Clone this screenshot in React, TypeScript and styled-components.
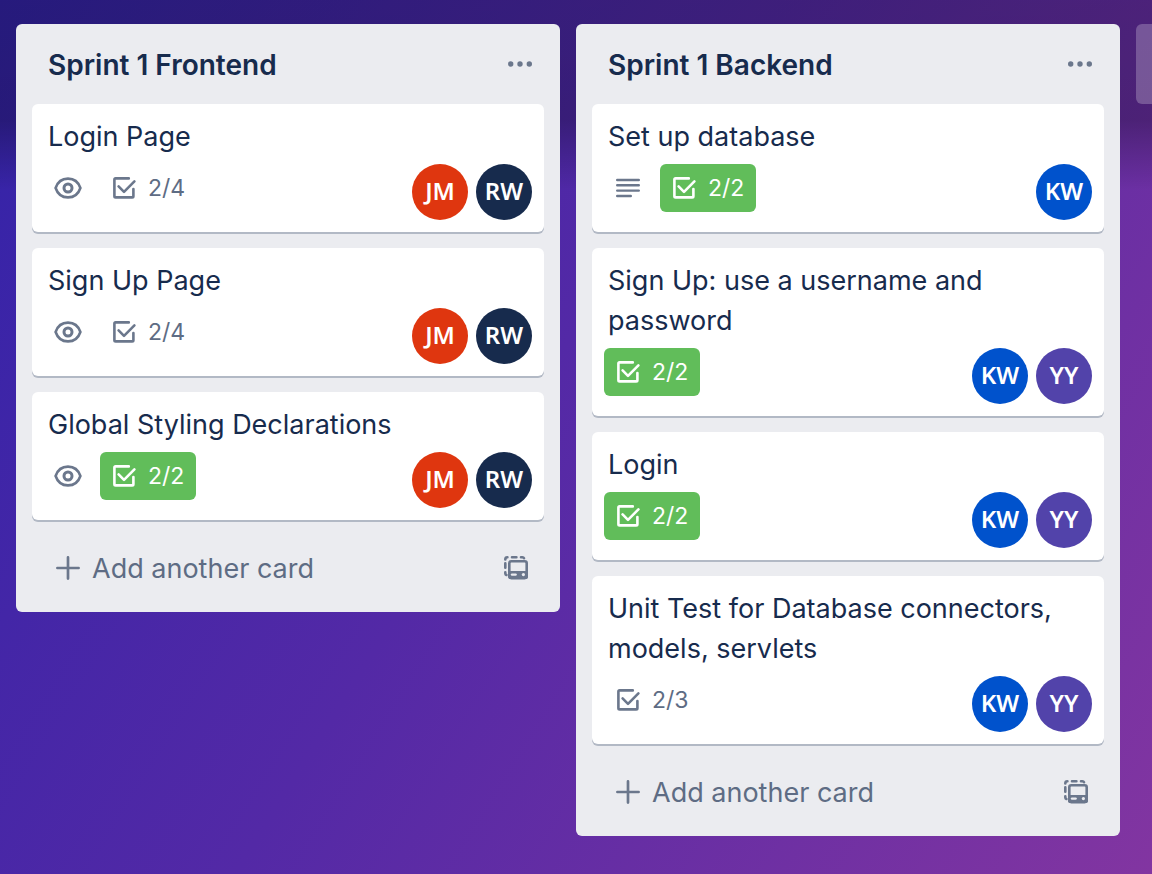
import React from "react";
import styled, { createGlobalStyle } from "styled-components";

const GlobalStyle = createGlobalStyle`
  *, *::before, *::after { box-sizing: border-box; }
  html { height: 100%; }
  body {
    margin: 0;
    height: 100%;
    font-family: Inter, "Liberation Sans", sans-serif;
    color: #172b4d;
  }
  #root { height: 100%; }
`;

const Board = styled.main`
  display: flex;
  align-items: flex-start;
  gap: 16px;
  min-height: 100%;
  padding: 24px 0 24px 16px;
  overflow: hidden;
  background:
    linear-gradient(180deg, rgba(0, 0, 0, 0.26) 0, rgba(0, 0, 0, 0.28) 120px, rgba(0, 0, 0, 0) 190px),
    linear-gradient(122deg, #3323a8 0%, #5329a6 46%, #8235a1 100%);
`;

const List = styled.section`
  flex: 0 0 calc(50% - 24px);
  min-width: 320px;
  padding: 0 16px 12px;
  border-radius: 6px;
  background: #ebecf0;
`;

const ListHeader = styled.header`
  display: flex;
  align-items: center;
  justify-content: space-between;
  height: 80px;
  padding: 0 4px 0 16px;
`;

const ListTitle = styled.h2`
  margin: 0;
  padding-top: 2px;
  font-size: 28px;
  font-weight: 600;
  line-height: 40px;
`;

const IconButton = styled.button`
  display: flex;
  align-items: center;
  justify-content: center;
  width: 40px;
  height: 40px;
  padding: 0;
  border: 0;
  background: none;
  color: #6b778c;
  cursor: pointer;
`;

const Cards = styled.ul`
  display: flex;
  flex-direction: column;
  gap: 16px;
  margin: 0;
  padding: 0;
  list-style: none;
`;

const CardBox = styled.li`
  padding: 13px 12px 12px 16px;
  border-radius: 6px;
  background: #fff;
  box-shadow: 0 2px 0 rgba(9, 30, 66, 0.25);
`;

const CardTitle = styled.h3`
  margin: 0 0 7px;
  font-size: 27px;
  font-weight: 400;
  line-height: 40px;
`;

const CardFooter = styled.div`
  display: flex;
  align-items: flex-start;
  justify-content: space-between;
  margin-left: -4px;
`;

const Group = styled.div`
  display: flex;
  gap: 8px;
`;

const Badge = styled.span<{ $done?: boolean }>`
  display: flex;
  align-items: center;
  height: 48px;
  padding-right: ${(p) => (p.$done ? 12 : 0)}px;
  border-radius: 6px;
  background: ${(p) => (p.$done ? "#61bd5a" : "transparent")};
  color: ${(p) => (p.$done ? "#fff" : "#6b778c")};
  font-size: 23px;
  line-height: 40px;
`;

const BadgeIcon = styled.svg`
  width: 48px;
  height: 48px;
`;

const BadgeText = styled.span<{ $done?: boolean }>`
  color: ${(p) => (p.$done ? "#fff" : "#5e6c84")};
`;

const Avatar = styled.span<{ $color: string }>`
  display: flex;
  align-items: center;
  justify-content: center;
  width: 56px;
  height: 56px;
  padding-bottom: 2px;
  border-radius: 50%;
  background: ${(p) => p.$color};
  color: #fff;
  font-family: "Noto Sans", "Open Sans", sans-serif;
  font-size: 24px;
  font-weight: 600;
  line-height: 32px;
`;

const ListFooter = styled.footer`
  display: flex;
  align-items: center;
  justify-content: space-between;
  height: 64px;
  margin-top: 16px;
  padding: 0 8px 0 16px;
`;

const AddCard = styled.button`
  display: flex;
  align-items: center;
  gap: 4px;
  padding: 0;
  border: 0;
  background: none;
  color: #5e6c84;
  font: inherit;
  font-size: 27px;
  line-height: 40px;
  cursor: pointer;
`;

const AddCardLabel = styled.span`
  padding-top: 2px;
`;

const AddList = styled.button`
  flex: 0 0 calc(50% - 24px);
  height: 80px;
  border: 0;
  border-radius: 6px;
  background: rgba(255, 255, 255, 0.24);
  cursor: pointer;
`;

const EyeIcon = () => (
  <BadgeIcon viewBox="0 0 48 48" fill="none" stroke="currentColor" strokeWidth="2.6" role="img" aria-label="Watching">
    <path d="M11.6 24C13.6 18 18.4 14.6 24 14.6S34.4 18 36.4 24C34.4 30 29.6 33.4 24 33.4S13.6 30 11.6 24Z" />
    <circle cx="24" cy="24" r="4" strokeWidth="3" />
  </BadgeIcon>
);

const CheckIcon = () => (
  <BadgeIcon viewBox="0 0 48 48" fill="none" stroke="currentColor" strokeWidth="2.6" strokeLinecap="round" strokeLinejoin="round" aria-hidden="true">
    <path d="M28.8 14.4H15.6Q14.4 14.4 14.4 15.6V32.2Q14.4 33.4 15.6 33.4H32.2Q33.4 33.4 33.4 32.2V25" />
    <path d="M18.6 22.4L24 27.8L34.4 17.4" />
  </BadgeIcon>
);

const TextIcon = () => (
  <BadgeIcon viewBox="0 0 48 48" fill="none" stroke="currentColor" strokeWidth="2.4" strokeLinecap="round" role="img" aria-label="Has description">
    <path d="M13.2 16H34.8M13.2 21.3H34.8M13.2 26.6H34.8M13.2 32H26.8" />
  </BadgeIcon>
);

const DotsIcon = () => (
  <svg width="40" height="40" viewBox="0 0 40 40" fill="currentColor" aria-hidden="true">
    <circle cx="10.7" cy="20" r="2.7" />
    <circle cx="20" cy="20" r="2.7" />
    <circle cx="29.3" cy="20" r="2.7" />
  </svg>
);

const PlusIcon = () => (
  <svg width="40" height="40" viewBox="0 0 40 40" fill="none" stroke="#6b778c" strokeWidth="2.7" strokeLinecap="round" aria-hidden="true">
    <path d="M20 9.4V30.6M9.4 20H30.6" />
  </svg>
);

const TemplateIcon = () => (
  <svg width="40" height="40" viewBox="0 0 40 40" fill="none" stroke="currentColor" strokeWidth="2.6" strokeLinecap="round" aria-hidden="true">
    <path d="M9.3 11.4Q9.3 9.3 11.4 9.3M16 9.3H20.4M25 9.3H26.4Q27.6 9.3 28 10.2M9.3 15.4V19.8M9.3 24.4V25.2Q9.3 26.6 10.4 27" />
    <rect x="13.3" y="13.3" width="17.4" height="16.8" rx="2" />
    <path d="M12 23H32V28.4Q32 31 29.4 31H14.6Q12 31 12 28.4Z" fill="currentColor" stroke="none" />
    <path d="M16 26.6H19.6" stroke="#ebecf0" strokeWidth="2.4" />
    <circle cx="27.4" cy="26.6" r="1.6" fill="#ebecf0" stroke="none" />
  </svg>
);

type Member = "JM" | "RW" | "KW" | "YY";

const memberColors: Record<Member, string> = {
  JM: "#df360f",
  RW: "#172b4d",
  KW: "#0052cc",
  YY: "#5243aa",
};

interface CardData {
  title: string;
  checks: string;
  members: Member[];
  watching?: boolean;
  described?: boolean;
}

const lists: { title: string; cards: CardData[] }[] = [
  {
    title: "Sprint 1 Frontend",
    cards: [
      { title: "Login Page", checks: "2/4", members: ["JM", "RW"], watching: true },
      { title: "Sign Up Page", checks: "2/4", members: ["JM", "RW"], watching: true },
      { title: "Global Styling Declarations", checks: "2/2", members: ["JM", "RW"], watching: true },
    ],
  },
  {
    title: "Sprint 1 Backend",
    cards: [
      { title: "Set up database", checks: "2/2", members: ["KW"], described: true },
      { title: "Sign Up: use a username and password", checks: "2/2", members: ["KW", "YY"] },
      { title: "Login", checks: "2/2", members: ["KW", "YY"] },
      { title: "Unit Test for Database connectors, models, servlets", checks: "2/3", members: ["KW", "YY"] },
    ],
  },
];

const Card = ({ card }: { card: CardData }) => {
  const done = card.checks === "2/2";
  return (
    <CardBox>
      <CardTitle>{card.title}</CardTitle>
      <CardFooter>
        <Group>
          {card.watching && <Badge><EyeIcon /></Badge>}
          {card.described && <Badge><TextIcon /></Badge>}
          <Badge $done={done}>
            <CheckIcon />
            <BadgeText $done={done}>{card.checks}</BadgeText>
          </Badge>
        </Group>
        <Group>
          {card.members.map((m) => (
            <Avatar key={m} $color={memberColors[m]}>{m}</Avatar>
          ))}
        </Group>
      </CardFooter>
    </CardBox>
  );
};

export default function App() {
  return (
    <>
      <GlobalStyle />
      <Board>
        {lists.map((list) => (
          <List key={list.title}>
            <ListHeader>
              <ListTitle>{list.title}</ListTitle>
              <IconButton type="button" aria-label="List actions"><DotsIcon /></IconButton>
            </ListHeader>
            <Cards>
              {list.cards.map((card) => <Card key={card.title} card={card} />)}
            </Cards>
            <ListFooter>
              <AddCard type="button">
                <PlusIcon />
                <AddCardLabel>Add another card</AddCardLabel>
              </AddCard>
              <IconButton type="button" aria-label="Create from template"><TemplateIcon /></IconButton>
            </ListFooter>
          </List>
        ))}
        <AddList type="button" aria-label="Add another list" />
      </Board>
    </>
  );
}
